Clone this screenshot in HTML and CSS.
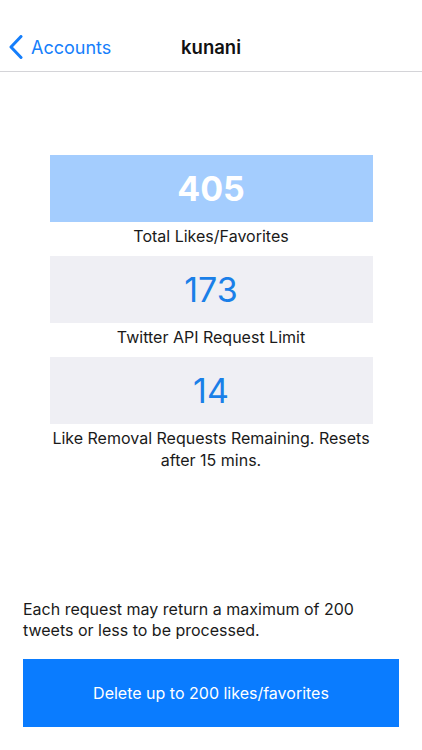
FILE: index.html
```html
<!DOCTYPE html>
<html>
<head>
<meta charset="utf-8">
<link rel="stylesheet" href="styles.css">
</head>
<body>
<div class="screen">
  <header class="nav">
    <div class="back">
      <svg class="chev" width="14" height="24" viewBox="0 0 14 24"><path d="M12 1.5 L2 12 L12 22.5" fill="none" stroke="#157EFB" stroke-width="3" stroke-linecap="round" stroke-linejoin="round"/></svg>
      <span>Accounts</span>
    </div>
    <div class="title">kunani</div>
  </header>
  <main class="stats">
    <div class="stat">
      <div class="box box-primary">405</div>
      <div class="label">Total Likes/Favorites</div>
    </div>
    <div class="stat">
      <div class="box">173</div>
      <div class="label">Twitter API Request Limit</div>
    </div>
    <div class="stat">
      <div class="box">14</div>
      <div class="label">Like Removal Requests Remaining. Resets after 15 mins.</div>
    </div>
  </main>
  <footer class="footer">
    <p class="note">Each request may return a maximum of 200 tweets or less to be processed.</p>
    <div class="button">Delete up to 200 likes/favorites</div>
  </footer>
</div>
</body>
</html>
```

FILE: styles.css
```css
html, body {
  margin: 0;
  padding: 0;
  background: #fff;
}
.screen {
  width: 422px;
  height: 750px;
  display: flex;
  flex-direction: column;
  font-family: "Inter", "Roboto", "Liberation Sans", sans-serif;
  color: #111;
}
.nav {
  position: relative;
  height: 72px;
  box-sizing: border-box;
  padding-top: 23px;
  border-bottom: 1px solid #d4d4d8;
  display: flex;
  align-items: center;
}
.back {
  display: flex;
  align-items: center;
  padding-left: 9px;
  color: #157EFB;
  font-size: 18px;
  gap: 8px;
}
.title {
  position: absolute;
  left: 0;
  right: 0;
  top: 23px;
  bottom: 0;
  display: flex;
  align-items: center;
  justify-content: center;
  font-size: 18.5px;
  font-weight: 600;
  pointer-events: none;
}
.stats {
  padding-top: 83px;
  display: flex;
  flex-direction: column;
  align-items: center;
  gap: 9px;
}
.stat {
  width: 323px;
  display: flex;
  flex-direction: column;
}
.box {
  height: 67px;
  background: #EFEFF4;
  display: flex;
  align-items: center;
  justify-content: center;
  font-size: 34px;
  color: #1A7FE8;
}
.box-primary {
  background: #A4CDFE;
  color: #fff;
  font-weight: 700;
}
.label {
  margin: 3px -6px 0;
  font-size: 16px;
  line-height: 22px;
  text-align: center;
  color: #1a1a1a;
}
.footer {
  margin-top: auto;
  padding: 0 23px 23px;
}
.note {
  margin: 0 0 18px;
  font-size: 16px;
  line-height: 21px;
  color: #1a1a1a;
}
.button {
  height: 68px;
  background: #0A7CFF;
  color: #fff;
  display: flex;
  align-items: center;
  justify-content: center;
  font-size: 16px;
}
```
